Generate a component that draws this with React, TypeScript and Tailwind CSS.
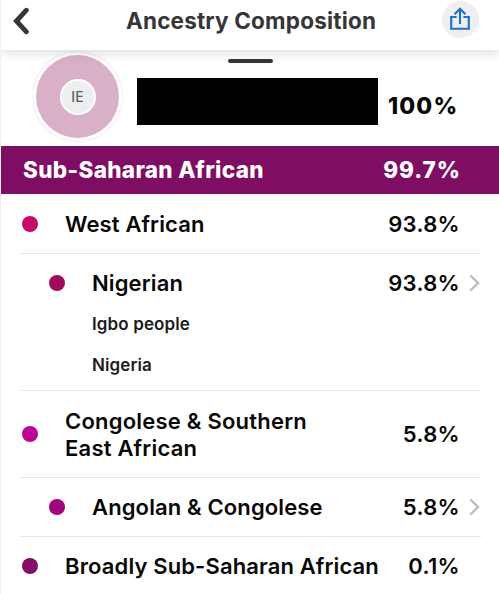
interface Region {
  name: string;
  percent: string;
  color: string;
  height: string;
  nested?: boolean;
  link?: boolean;
  wrap?: boolean;
  details?: string[];
}

const regions: Region[] = [
  { name: 'West African', percent: '93.8%', color: 'bg-[#c9086b]', height: 'h-[59px]' },
  {
    name: 'Nigerian',
    percent: '93.8%',
    color: 'bg-[#a00a5a]',
    height: 'h-[58px]',
    nested: true,
    link: true,
    details: ['Igbo people', 'Nigeria'],
  },
  { name: 'Congolese & Southern East African', percent: '5.8%', color: 'bg-[#bd0593]', height: 'h-[86px]', wrap: true },
  { name: 'Angolan & Congolese', percent: '5.8%', color: 'bg-[#a0057f]', height: 'h-[58px]', nested: true, link: true },
  { name: 'Broadly Sub-Saharan African', percent: '0.1%', color: 'bg-[#830f69]', height: 'h-[58px]' },
];

function BackIcon() {
  return (
    <svg className="h-7 w-[18px]" viewBox="0 0 18 28" fill="none" stroke="#363538" strokeWidth="4.8" strokeLinecap="round" strokeLinejoin="miter">
      <path d="M15.4 3.2 5.4 14l10 10.8" />
    </svg>
  );
}

function ShareIcon() {
  return (
    <svg className="h-6 w-5" viewBox="0 0 20 24" fill="none" stroke="#1d6fcb" strokeWidth="2.1">
      <path d="M6.6 10H1.2v11.8h17.6V10h-5.4" />
      <path d="M10 17V2M4.6 7.2 10 1.8l5.4 5.4" />
    </svg>
  );
}

function ChevronIcon() {
  return (
    <svg className="h-[18px] w-[11px]" viewBox="0 0 11 18" fill="none" stroke="#bcbcbe" strokeWidth="2.4" strokeLinecap="round">
      <path d="m2 2 7 7-7 7" />
    </svg>
  );
}

function RegionRow({ region }: { region: Region }) {
  return (
    <li className="ml-[19px] mr-[18px] border-b border-[#e6e6e7] last:border-b-0">
      <div className={`flex items-center text-[22px] font-semibold leading-[27px] ${region.height} ${region.nested ? 'pl-[29px]' : 'pl-[2px]'}`}>
        <span className={`mr-[27px] size-4 shrink-0 rounded-full ${region.color}`} />
        <span className={`shrink-0 pt-px tracking-[0.006em] ${region.nested ? 'w-[294px]' : 'w-[321px]'}`}>
          <span className={`block ${region.wrap ? 'w-[260px] tracking-[0.01em]' : 'whitespace-nowrap'}`}>{region.name}</span>
        </span>
        <span className="flex w-[74px] shrink-0 justify-end pt-px tracking-[0.015em]">{region.percent}</span>
        {region.link && (
          <span className="ml-[9px] shrink-0">
            <ChevronIcon />
          </span>
        )}
      </div>
      {region.details && (
        <div className="-mt-2 h-[86px] pl-[72px] text-[17px] font-semibold leading-[41px] tracking-[0.007em] text-[#1c1c1c]">
          {region.details.map((detail) => (
            <p key={detail}>{detail}</p>
          ))}
        </div>
      )}
    </li>
  );
}

export default function App() {
  return (
    <div className="h-[594px] w-[499px] overflow-hidden border-l border-[#f1f1f2] bg-white font-['Inter',sans-serif] text-[#080808]">
      <header className="relative flex h-[50px] items-start bg-white pl-[10px] pr-5 shadow-[0_2px_12px_rgba(0,0,0,0.16)]">
        <button className="mt-[7px]" aria-label="Back">
          <BackIcon />
        </button>
        <h1 className="ml-[97px] mt-[6px] flex-1 whitespace-nowrap text-[22.5px] font-bold leading-[30px] tracking-[0.008em] text-[#363538]">Ancestry Composition</h1>
        <button className="mt-[1px] flex size-[37px] items-start justify-center rounded-full bg-[#efeff1] pr-[2px] pt-[6px]" aria-label="Share">
          <ShareIcon />
        </button>
      </header>

      {/* Profile summary */}
      <section className="flex h-24">
        <div className="ml-8 mt-[2px] flex size-[89px] shrink-0 items-center justify-center rounded-full bg-white shadow-[0_0_3px_rgba(0,0,0,0.14)]">
          <div className="flex size-[83px] items-center justify-center rounded-full bg-[#dab0c8]">
            <div className="flex size-9 items-center justify-center rounded-full border-2 border-white bg-[#eceef0] text-[14px] font-medium text-[#626266]">IE</div>
          </div>
        </div>
        <div className="ml-[15px]">
          <div className="ml-[91px] mt-[9px] h-1 w-[45px] rounded-full bg-[#363538]" />
          <div className="mt-[15px] h-[47px] w-[241px] bg-black" />
        </div>
        <div className="ml-[10px] mt-[43px] text-[23px] font-extrabold leading-[27px] tracking-[0.05em]">100%</div>
      </section>

      <div className="flex h-12 items-center justify-between bg-[#7f0e63] pl-[22px] pr-[38px] text-[22.5px] font-extrabold text-white">
        <span className="tracking-[0.015em]">Sub-Saharan African</span>
        <span className="tracking-[0.045em]">99.7%</span>
      </div>

      <ul>
        {regions.map((region) => (
          <RegionRow key={region.name} region={region} />
        ))}
      </ul>
    </div>
  );
}
